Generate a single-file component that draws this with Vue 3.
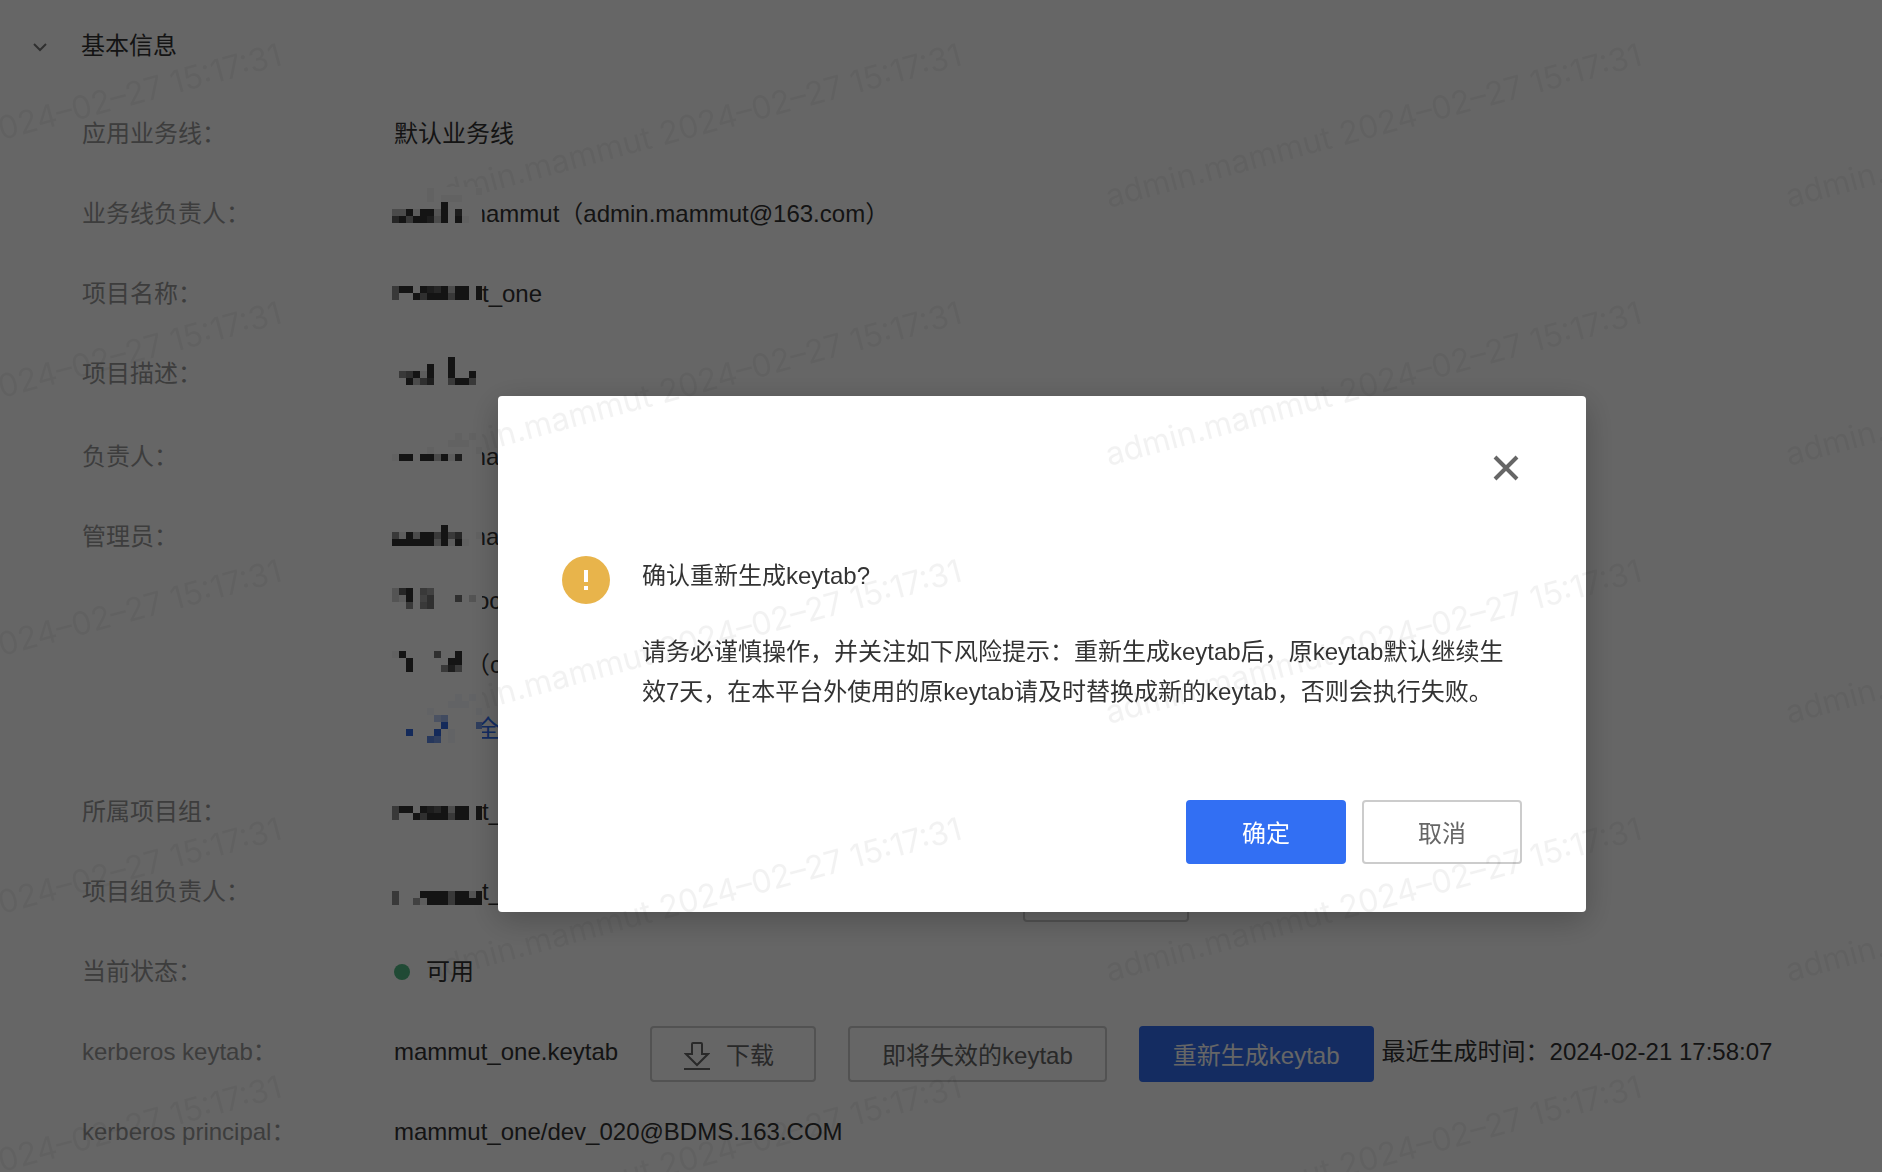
<script setup>
const CELL = 7

// Each digit is the darkness of one mosaic cell: 0 is clear, 'a' is a faint trace.
const groupMosaic = { top: 32, rows: ['5990987939909', '5009699959909'] }

const rows = [
  { label: '应用业务线', lines: [{ text: '默认业务线' }] },
  {
    label: '业务线负责人',
    lines: [{
      text: 'mammut（admin.mammut@163.com）',
      cut: 'wide',
      mosaic: { top: 14, rows: ['00000a000000a', '00000a0aaa000', '0000000900000', '3391992908000', '7959983909a00'] },
    }],
  },
  { label: '项目名称', lines: [{ text: 't_one', cut: 'thin', mosaic: groupMosaic }] },
  {
    label: '项目描述',
    spaced: true,
    lines: [{ text: '', mosaic: { top: 23, rows: ['0000000090000', '0000090090000', '0569190090090', '0093680059950'] } }],
  },
  {
    label: '负责人',
    lines: [{
      text: 'ma',
      cut: 'wide',
      mosaic: { top: 16, rows: ['000000000a0a0', '00000000aaa00', '00000a000000a', 'a990993918000'] },
    }],
  },
  {
    label: '管理员',
    spaced: true,
    lines: [
      { text: 'ma', cut: 'wide', mosaic: { top: 28, rows: ['0000000900000', '519399595700a', '9999993919a00'] } },
      { text: 'oc', cut: 'half', mosaic: { top: 27, rows: ['2790540000000', '2190460006020', '0050560000000'] } },
      { text: '（c', cut: 'wide', mosaic: { top: 26, rows: ['a900006009000', '0090000099000', '0090000585000'] } },
      {
        text: '全',
        link: true,
        cut: 'half',
        mosaic: { top: 5, rows: ['000000000a0a0', '00000000aaa00', '00000a000000a', '0000003400000', '0000000900006', '00900090a0000', '00000760a0000'] },
      },
    ],
  },
  { label: '所属项目组', lines: [{ text: 't_', cut: 'thin', mosaic: { ...groupMosaic, top: 34 } }] },
  {
    label: '项目组负责人',
    kind: 'owner',
    lines: [{ text: 't_', cut: 'thin', mosaic: { top: 39, rows: ['5000999959929', '5004199959999'] } }],
  },
  { label: '当前状态', kind: 'status', lines: [{ text: '可用' }] },
  { label: 'kerberos keytab', kind: 'keytab', lines: [{ text: 'mammut_one.keytab' }] },
  { label: 'kerberos principal', lines: [{ text: 'mammut_one/dev_020@BDMS.163.COM' }] },
]

function cells(mosaic) {
  return mosaic.rows.flatMap((row, r) =>
    [...row].map((d, c) => ({
      x: c * CELL,
      y: mosaic.top + r * CELL,
      o: d === 'a' ? 0.04 : (Number(d) * 0.8) / 9,
    })).filter((cell) => cell.o > 0),
  )
}
</script>

<template>
  <main class="page">
    <header class="section-head">
      <svg class="chevron" viewBox="0 0 16 16" aria-hidden="true">
        <path d="M2 4l6 6 6-6" />
      </svg>
      <h1>基本信息</h1>
    </header>

    <dl class="info">
      <div v-for="row in rows" :key="row.label" class="row" :class="{ spaced: row.spaced }">
        <dt>{{ row.label }}：</dt>
        <dd :class="row.kind">
          <span v-if="row.kind === 'status'" class="dot"></span>
          <div class="lines">
            <div v-for="(line, i) in row.lines" :key="i" class="line">
              <span v-if="line.mosaic" class="redacted" :class="{ blue: line.link }">
                <svg viewBox="0 0 90 80" aria-hidden="true" shape-rendering="crispEdges">
                  <rect
                    v-for="(cell, n) in cells(line.mosaic)"
                    :key="n"
                    :x="cell.x"
                    :y="cell.y"
                    width="7"
                    height="7"
                    :fill-opacity="cell.o"
                  />
                </svg>
              </span>
              <a v-if="line.link" href="#" :class="line.cut">{{ line.text }}</a>
              <span v-else :class="line.cut">{{ line.text }}</span>
            </div>
          </div>
          <button v-if="row.kind === 'owner'" type="button" class="btn icon-btn"></button>
          <template v-if="row.kind === 'keytab'">
            <button type="button" class="btn icon-btn">
              <svg class="download" viewBox="0 0 26 30" aria-hidden="true">
                <path d="M9 2h8a1 1 0 0 1 1 1v10h6L13 24 2 13h6V3a1 1 0 0 1 1-1z" />
                <path d="M0 28h26" />
              </svg>
              <span>下载</span>
            </button>
            <button type="button" class="btn">即将失效的keytab</button>
            <button type="button" class="btn primary">重新生成keytab</button>
            <span class="time">最近生成时间：2024-02-21 17:58:07</span>
          </template>
        </dd>
      </div>
    </dl>
  </main>

  <div class="overlay">
    <section class="dialog" role="alertdialog" aria-modal="true" aria-labelledby="dialog-title">
      <button type="button" class="close" aria-label="关闭">
        <svg viewBox="0 0 32 32" aria-hidden="true">
          <path d="M5 5l22 22M27 5L5 27" />
        </svg>
      </button>
      <div class="dialog-body">
        <svg class="warn" viewBox="0 0 48 48" aria-hidden="true">
          <circle cx="24" cy="24" r="24" fill="#e8b44b" />
          <path d="M22 14h4v12h-4zM22 30h4v4h-4z" fill="#fff" />
        </svg>
        <div class="dialog-text">
          <h2 id="dialog-title">确认重新生成keytab?</h2>
          <p>请务必谨慎操作，并关注如下风险提示：重新生成keytab后，原keytab默认继续生效7天，在本平台外使用的原keytab请及时替换成新的keytab，否则会执行失败。</p>
        </div>
      </div>
      <footer class="dialog-foot">
        <button type="button" class="action ok">确定</button>
        <button type="button" class="action">取消</button>
      </footer>
    </section>
  </div>

  <svg class="watermark" aria-hidden="true">
    <defs>
      <pattern id="mark" x="369" y="-12" width="680" height="258" patternUnits="userSpaceOnUse">
        <text x="60" y="220" transform="rotate(-15 60 220)">admin.mammut 2024–02–27 15:17:31</text>
      </pattern>
      <mask id="mark-area" maskUnits="userSpaceOnUse" x="0" y="0" width="100%" height="100%">
        <rect width="100%" height="100%" fill="#fff" />
        <rect x="392" y="187" width="90" height="560" fill="#000" />
      </mask>
    </defs>
    <rect width="100%" height="100%" fill="url(#mark)" mask="url(#mark-area)" />
  </svg>
</template>

<style>
body {
  margin: 0;
  background: #fff;
}
</style>

<style scoped>
.page,
.overlay {
  font-family: "Liberation Sans", "Noto Sans CJK SC", sans-serif;
  font-size: 24px;
  line-height: 40px;
  color: #333;
}

.page {
  min-height: 100vh;
  box-sizing: border-box;
  padding-top: 26px;
}

h1,
h2 {
  margin: 0;
  font-size: 24px;
  font-weight: 400;
}

.section-head {
  display: flex;
  align-items: center;
  gap: 33px;
  padding-left: 32px;
  margin-bottom: 48px;
}

.chevron {
  width: 16px;
  height: 16px;
  padding-top: 4px;
  fill: none;
  stroke: #777;
  stroke-width: 2;
}

.info {
  display: flex;
  flex-direction: column;
  gap: 40px;
  margin: 0;
  padding-left: 82px;
}

.row {
  display: flex;
}

.spaced {
  padding-bottom: 3px;
}

dt {
  flex: 0 0 312px;
  color: #999;
}

dd {
  display: flex;
  flex: 1;
  margin: 0;
  gap: 32px;
  height: 100%;
  white-space: nowrap;
}

dd.status {
  gap: 16px;
  align-items: center;
}

.dot {
  width: 16px;
  height: 16px;
  border-radius: 50%;
  background: #52b984;
}

.lines {
  display: flex;
  flex-direction: column;
  gap: 24px;
}

.owner .lines {
  width: 597px;
}

.line {
  display: flex;
  height: 40px;
}

.redacted {
  position: relative;
  z-index: 1;
  width: 90px;
  height: 40px;
  margin-left: -2px;
  background: #fff;
}

.redacted svg {
  position: absolute;
  top: -20px;
  left: 0;
  width: 90px;
  height: 80px;
  fill: #000;
}

.redacted.blue svg {
  fill: #0043d8;
}

.wide {
  margin-left: -16px;
}

.half {
  margin-left: -6px;
}

.line a {
  color: #326ff3;
  text-decoration: none;
}

.btn {
  display: flex;
  align-items: center;
  justify-content: center;
  box-sizing: border-box;
  height: 56px;
  margin: -6px 0 -10px;
  padding: 4px 32px 0;
  border: 2px solid #ccc;
  border-radius: 4px;
  background: #fff;
  color: #666;
  font: inherit;
}

.icon-btn {
  gap: 16px;
  min-width: 166px;
  padding-right: 40px;
}

.download {
  width: 26px;
  height: 30px;
  fill: none;
  stroke: #666;
  stroke-width: 2;
}

.primary {
  border-color: #326ff3;
  background: #326ff3;
  color: #fff;
}

.time {
  margin-left: -24px;
}

.overlay {
  position: fixed;
  inset: 0;
  z-index: 2;
  display: flex;
  align-items: flex-start;
  justify-content: center;
  padding: 396px 0 0 202px;
  background: rgba(0, 0, 0, 0.6);
}

.dialog {
  box-sizing: border-box;
  width: 1088px;
  padding: 56px 64px 48px;
  border-radius: 4px;
  background: #fff;
  box-shadow: 0 8px 32px rgba(0, 0, 0, 0.24);
}

.close {
  display: block;
  width: 32px;
  height: 32px;
  margin: 0 0 72px auto;
  padding: 0;
  border: 0;
  background: none;
}

.close svg {
  display: block;
  fill: none;
  stroke: #666;
  stroke-width: 4;
}

.dialog-body {
  display: flex;
  gap: 32px;
}

.warn {
  flex: none;
  width: 48px;
  height: 48px;
}

.dialog-text p {
  margin: 36px 0 0;
}

.dialog-foot {
  display: flex;
  justify-content: flex-end;
  gap: 16px;
  margin-top: 88px;
}

.action {
  box-sizing: border-box;
  width: 160px;
  height: 64px;
  padding: 4px 0 0;
  border: 2px solid #ccc;
  border-radius: 4px;
  background: #fff;
  color: #666;
  font: inherit;
}

.ok {
  border-color: #326ff3;
  background: #326ff3;
  color: #fff;
}

.watermark {
  position: fixed;
  inset: 0;
  z-index: 3;
  width: 100%;
  height: 100%;
  pointer-events: none;
  font-family: Inter, sans-serif;
  font-size: 32px;
  fill: rgba(0, 0, 0, 0.05);
}
</style>
